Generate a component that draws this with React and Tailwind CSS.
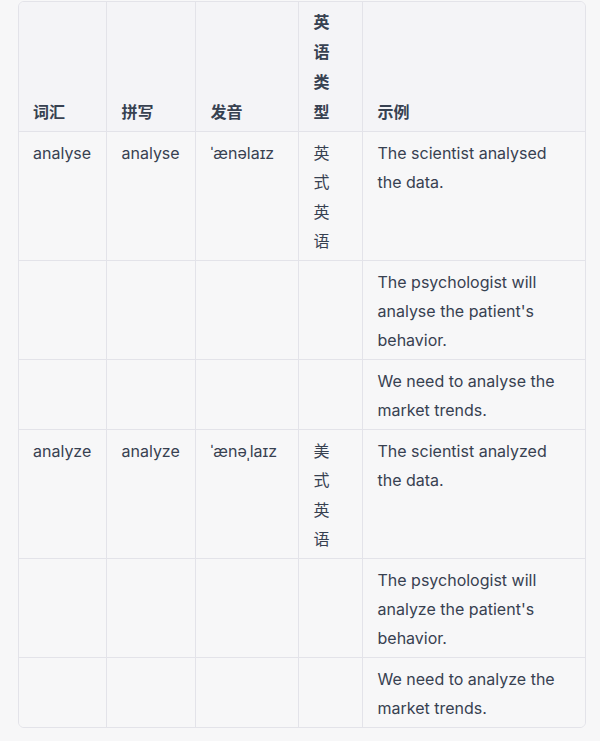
import React from "react";

const rows = [
  { word: "analyse", spell: "analyse", ipa: "ˈænəlaɪz", type: "英式英语", ex: "The scientist analysed the data." },
  { word: "", spell: "", ipa: "", type: "", ex: "The psychologist will analyse the patient's behavior." },
  { word: "", spell: "", ipa: "", type: "", ex: "We need to analyse the market trends." },
  { word: "analyze", spell: "analyze", ipa: "ˈænəˌlaɪz", type: "美式英语", ex: "The scientist analyzed the data." },
  { word: "", spell: "", ipa: "", type: "", ex: "The psychologist will analyze the patient's behavior." },
  { word: "", spell: "", ipa: "", type: "", ex: "We need to analyze the market trends." },
];

export default function App() {
  const font = { fontFamily: 'Inter, "Noto Sans CJK SC", sans-serif' };
  return (
    <div className="min-h-[741px] w-[600px] bg-[#f7f7f8] pt-[1px]" style={font}>
      <div className="ml-[18px] w-[568px] rounded-md border border-[#e3e3e9] overflow-hidden">
        <table className="w-full table-fixed border-collapse text-[16px] text-[#374151]">
          <colgroup>
            <col className="w-[87px]" />
            <col className="w-[89px]" />
            <col className="w-[103px]" />
            <col className="w-[64px]" />
            <col />
          </colgroup>
          <thead>
            <tr className="bg-[#f4f4f7]">
              <th className="border-b border-[#e3e3e9] px-[14px] pt-[5px] pb-[4px] text-left align-bottom font-bold leading-[30px]">词汇</th>
              <th className="border-b border-l border-[#e3e3e9] px-[15px] pt-[5px] pb-[4px] text-left align-bottom font-bold leading-[30px]">拼写</th>
              <th className="border-b border-l border-[#e3e3e9] px-[15px] pt-[5px] pb-[4px] text-left align-bottom font-bold leading-[30px]">发音</th>
              <th className="border-b border-l border-[#e3e3e9] px-[15px] pt-[5px] pb-[4px] text-left align-bottom font-bold leading-[30px]">
                <span className="block w-[17px]">英语类型</span>
              </th>
              <th className="border-b border-l border-[#e3e3e9] px-[15px] pt-[5px] pb-[4px] text-left align-bottom font-bold leading-[30px]">示例</th>
            </tr>
          </thead>
          <tbody>
            {rows.map((r, i) => (
              <tr key={i} className="bg-[#f7f7f8]">
                <td className={`${i < rows.length - 1 ? "border-b" : ""} border-[#e3e3e9] px-[14px] pt-[7px] pb-[4px] align-top leading-[29px]`}>{r.word}</td>
                <td className={`${i < rows.length - 1 ? "border-b" : ""} border-l border-[#e3e3e9] px-[15px] pt-[7px] pb-[4px] align-top leading-[29px]`}>{r.spell}</td>
                <td className={`${i < rows.length - 1 ? "border-b" : ""} border-l border-[#e3e3e9] px-[15px] pt-[7px] pb-[4px] align-top leading-[29px]`}>{r.ipa}</td>
                <td className={`${i < rows.length - 1 ? "border-b" : ""} border-l border-[#e3e3e9] px-[15px] pt-[7px] pb-[4px] align-top leading-[29px]`}>
                  <span className="block w-[17px] leading-[29.25px]">{r.type}</span>
                </td>
                <td className={`${i < rows.length - 1 ? "border-b" : ""} border-l border-[#e3e3e9] px-[15px] pt-[7px] pb-[4px] align-top leading-[29px]`}>{r.ex}</td>
              </tr>
            ))}
          </tbody>
        </table>
      </div>
    </div>
  );
}
